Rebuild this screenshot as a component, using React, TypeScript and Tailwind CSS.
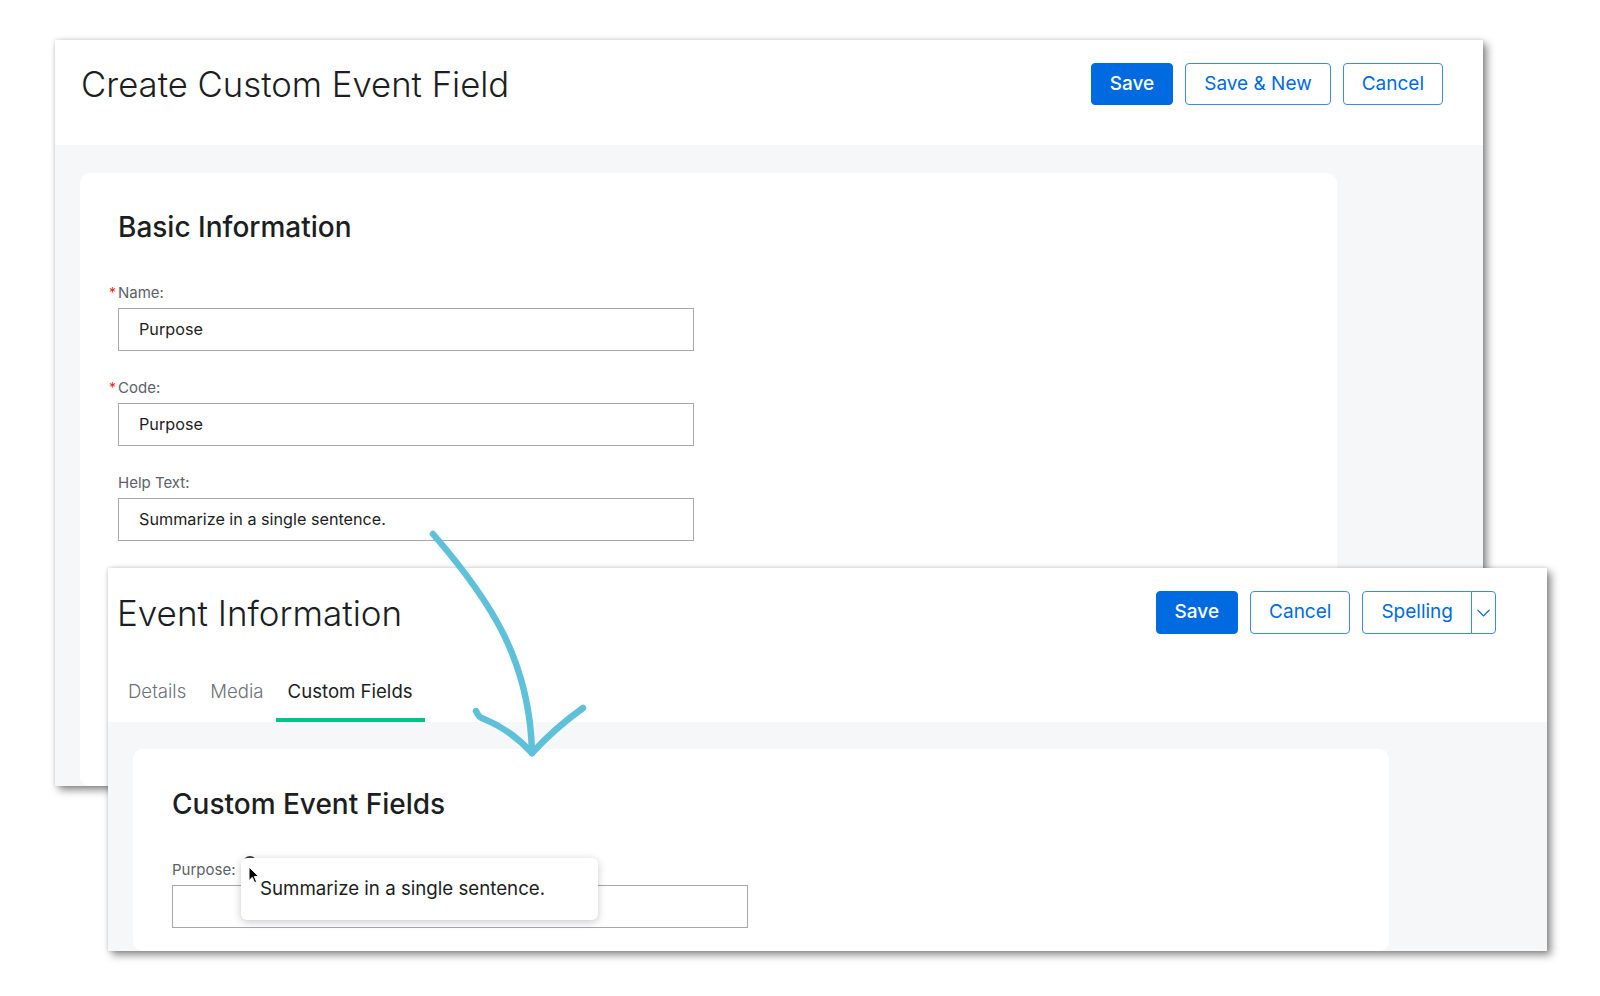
import { ChevronDown } from "lucide-react";

const font = { fontFamily: "Inter, 'Noto Sans', sans-serif" };

function Button({ label, primary }: { label: string; primary?: boolean }) {
  return (
    <button
      className={
        primary
          ? "h-full rounded-[4px] border border-[#006ae1] bg-[#006ae1] px-[18px] text-[19px] font-medium text-white"
          : "h-full rounded-[4px] border border-[#3d8ae6] bg-white px-[18px] text-[19px] text-[#006ae1]"
      }
    >
      {label}
    </button>
  );
}

function Field({ label, value, required, first }: { label: string; value: string; required?: boolean; first?: boolean }) {
  return (
    <div className={first ? "mt-[39px]" : "mt-[27px]"}>
      <div className="mb-[5px] flex h-[20px] items-center text-[15px] leading-[20px] text-[#5c6168]">
        {required && <span className="-ml-[9px] w-[9px] text-[14px] text-[#e0281f]">*</span>}
        {label}
      </div>
      <div className="flex h-[43px] w-[576px] items-center border border-[#a5a9af] px-[20px] text-[16.2px] text-[#1b1e22]">
        {value}
      </div>
    </div>
  );
}

export default function App() {
  return (
    <div className="relative h-[996px] w-[1600px] overflow-hidden bg-white" style={font}>
      {/* back window */}
      <div className="absolute left-[55px] top-[40px] flex h-[746px] w-[1428px] flex-col overflow-hidden bg-[#f6f7f9] shadow-[0_0_4px_rgba(0,0,0,0.15),4px_4px_8px_rgba(0,0,0,0.45)]">
        <div className="flex h-[105px] shrink-0 items-start justify-between bg-white pl-[26px] pr-[40px] pt-[23px]">
          <h1 className="text-[34.7px] font-light leading-[42px] text-[#1b1e22]">Create Custom Event Field</h1>
          <div className="flex h-[42px] gap-[12px]">
            <Button label="Save" primary />
            <Button label="Save & New" />
            <Button label="Cancel" />
          </div>
        </div>
        <div className="flex-1 px-[25px] pt-[28px]">
          <div className="h-full w-[1257px] rounded-[10px] bg-white pl-[38px] pt-[37px]">
            <h2 className="text-[28px] font-medium leading-[34px] text-[#1b1e22]">Basic Information</h2>
            <Field label="Name:" value="Purpose" required first />
            <Field label="Code:" value="Purpose" required />
            <Field label="Help Text:" value="Summarize in a single sentence." />
          </div>
        </div>
      </div>

      {/* front window */}
      <div className="absolute left-[108px] top-[568px] flex h-[383px] w-[1439px] flex-col overflow-hidden bg-[#f6f7f9] shadow-[0_0_4px_rgba(0,0,0,0.15),4px_4px_8px_rgba(0,0,0,0.45)]">
        <div className="shrink-0 bg-white pl-[9px] pr-[51px] pt-[23px]">
          <div className="flex h-[43px] items-center justify-between">
            <h1 className="text-[35px] font-light leading-[42px] text-[#1b1e22]">Event Information</h1>
            <div className="flex h-[43px] gap-[12px]">
              <Button label="Save" primary />
              <Button label="Cancel" />
              <div className="flex h-full">
                <button className="h-full rounded-l-[4px] border border-[#3d8ae6] bg-white px-[18px] text-[19px] text-[#006ae1]">
                  Spelling
                </button>
                <button className="-ml-px flex h-full w-[25px] items-center justify-center rounded-r-[4px] border border-[#3d8ae6] bg-white text-[#006ae1]">
                  <ChevronDown size={24} strokeWidth={1.4} />
                </button>
              </div>
            </div>
          </div>
          <div className="-ml-[1px] mt-[45px] flex text-[18.6px] leading-[24px]">
            <div className="border-b-4 border-transparent px-[12px] pb-[15px] font-light text-[#6d737a]">Details</div>
            <div className="border-b-4 border-transparent px-[12px] pb-[15px] font-light text-[#6d737a]">Media</div>
            <div className="border-b-4 border-[#00c389] px-[12px] pb-[15px] text-[#1b1e22]">Custom Fields</div>
          </div>
        </div>
        <div className="flex-1 px-[25px] pt-[27px]">
          <div className="h-full w-[1256px] rounded-[10px] bg-white pl-[39px] pt-[38px]">
            <h2 className="text-[28px] font-medium leading-[34px] text-[#1b1e22]">Custom Event Fields</h2>
            <div className="mt-[39px] flex h-[20px] items-start text-[15px] leading-[20px] text-[#5c6168]">
              Purpose:
              <span className="-mt-[4px] ml-[7px] h-[14px] w-[14px] rounded-full bg-[#3a3f45]" />
            </div>
            <div className="mt-[5px] h-[43px] w-[576px] border border-[#a5a9af]" />
          </div>
        </div>
      </div>

      {/* tooltip */}
      <div className="absolute left-[241px] top-[858px] flex h-[62px] w-[357px] items-center rounded-[6px] bg-white pl-[19px] text-[18.7px] text-[#1b1e22] shadow-[0_2px_8px_rgba(0,0,0,0.22)]">
        Summarize in a single sentence.
      </div>

      {/* mouse pointer */}
      <svg className="absolute left-[248px] top-[866px]" width="12" height="18" viewBox="0 0 12 18">
        <path d="M1 1 L1 14.5 L4.3 11.4 L6.6 16.6 L8.6 15.7 L6.4 10.6 L10.8 10.6 Z" fill="#000" stroke="#fff" strokeWidth="1" strokeLinejoin="round" />
      </svg>

      {/* hand-drawn arrow */}
      <svg className="pointer-events-none absolute left-0 top-0" width="1600" height="996" viewBox="0 0 1600 996">
        <g fill="none" stroke="#5fc1d9" strokeWidth="6.5" strokeLinecap="round" strokeLinejoin="round">
          <path d="M433 534 C 490 600, 530 660, 532 753" />
          <path d="M476 711 Q 479 718 484 719 Q 511 730 532 753" />
          <path d="M583 708 Q 555 728 532 753" />
        </g>
      </svg>
    </div>
  );
}
